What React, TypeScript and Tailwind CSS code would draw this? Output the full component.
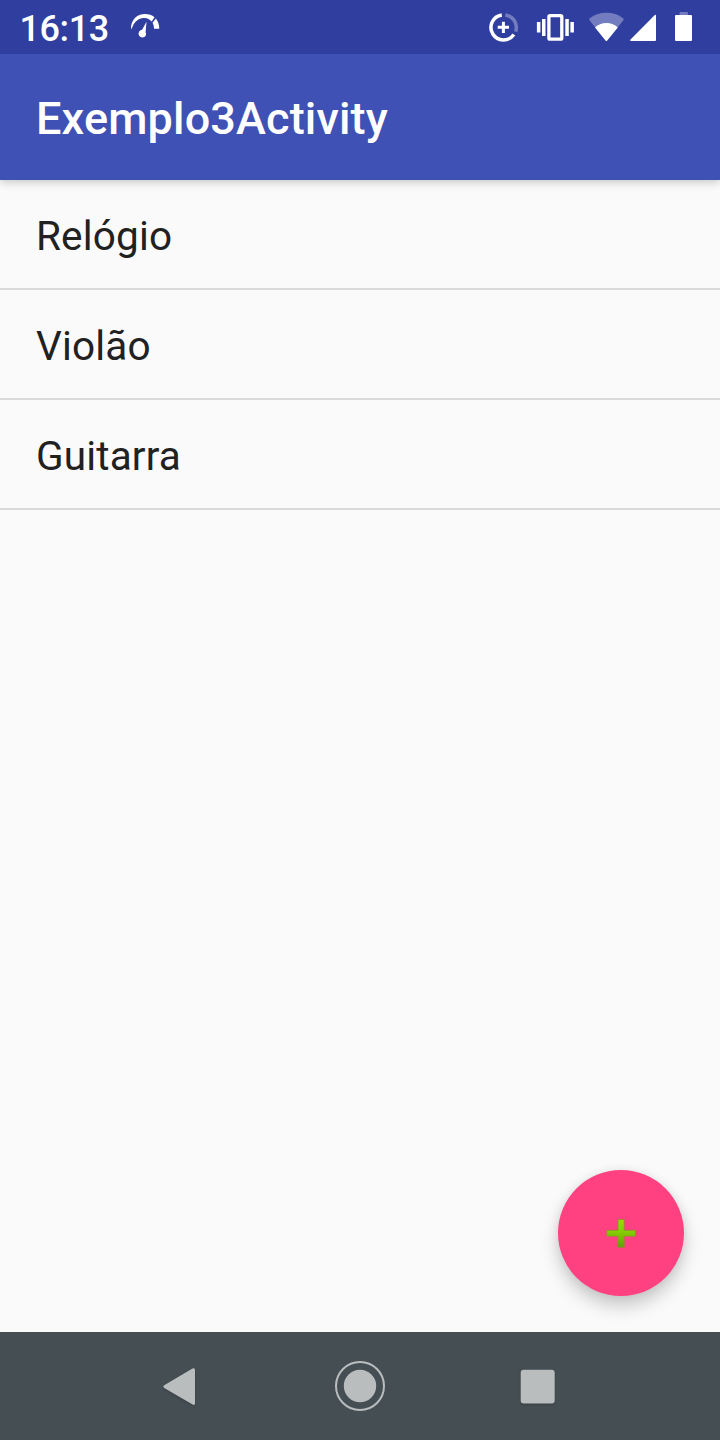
const items = ['Relógio', 'Violão', 'Guitarra'];

function StatusBar() {
  return (
    <div className="relative z-20 flex h-[54px] shrink-0 items-center bg-[#303f9f] pl-[19.500px] text-white">
      <span className="w-[90.500px] pt-[3px] text-[36px] leading-[42px] font-medium tracking-[-0.4px] whitespace-nowrap">16:13</span>
      <svg className="ml-[18px] h-[54px] w-[36px]" viewBox="128 0 36 54" fill="#fff">
        <path d="M131 28.500C130.800 20 137 14 145 14c3.800 0 7 1.200 9.500 3.200l-2.800 4.300C149.800 19.600 147.500 18.200 144.500 18 138.500 17.700 133.800 22 131.800 28.800Z" />
        <path d="M155.800 18.400c2.100 2.300 3.500 6 3.500 10.400h-5.300c-.1-2.600-.4-4.200-1.500-6Z" />
        <path d="M146.500 21.800l-.9 10.400c1.400 2.600-.4 5.200-3.100 5.200-2.900 0-4.800-2.900-3.500-5.400.7-1.400 1.800-1.800 3.100-2.200Z" />
      </svg>
      <div className="ml-auto flex h-full">
        <svg className="h-[54px] w-[48px]" viewBox="484 0 48 54" fill="none" stroke="#fff" strokeWidth="3.500">
          <path d="M501.800 14.900A12.600 12.600 0 1 0 513.900 34.600" />
          <path d="M505.300 14.900A12.600 12.600 0 0 1 515.600 31.600" strokeOpacity=".32" />
          <path d="M503.400 21.700v11.300M497.700 27.300h11.300" strokeWidth="3" />
        </svg>
        <svg className="h-[54px] w-[54px]" viewBox="532 0 54 54" fill="#fff">
          <rect x="548.900" y="15.700" width="12.900" height="23.500" rx="1.200" fill="none" stroke="#fff" strokeWidth="3.300" />
          <rect x="542" y="19" width="3.500" height="17" />
          <rect x="536.900" y="22" width="3.500" height="10.500" />
          <rect x="565.300" y="19" width="3.500" height="17" />
          <rect x="570.400" y="22" width="3.500" height="10.500" />
        </svg>
        <svg className="h-[54px] w-[42px]" viewBox="586 0 42 54" fill="#fff">
          <path d="M589.500 20.200q-.9-1.200.3-2Q597 12.800 606.400 12.800t16.700 5.400q1.200.8.300 2L607.200 40.500q-.8 1-1.600 0Z" fillOpacity=".32" />
          <path d="M595 27.600Q599.500 23 606.400 23t11.400 4.600L607.200 40.500q-.8 1-1.600 0Z" />
        </svg>
        <svg className="h-[54px] w-[34px]" viewBox="628 0 34 54" fill="#fff">
          <path d="M630.300 39.700 654.800 15q1.200-.8 1.200.7v24.300q0 1-1 1h-24q-1.300 0-.7-1.300Z" />
        </svg>
        <svg className="h-[54px] w-[58px]" viewBox="662 0 58 54" fill="#fff">
          <rect x="679.600" y="12" width="8.200" height="3" fillOpacity=".32" />
          <rect x="675" y="15" width="17" height="26" rx="1" />
        </svg>
      </div>
    </div>
  );
}

function NavigationBar() {
  return (
    <nav className="flex h-[108px] shrink-0 items-center justify-center bg-[#454e53]">
      <svg className="h-[108px] w-[400px]" viewBox="160 1332 400 108" fill="#b9bdbe">
        <g className="drop-shadow-[0_1px_1px_rgba(0,0,0,0.2)]">
          <path d="M164.200 1385.200 192.500 1368.500Q195 1367.300 195 1370v33.200q0 2.500-2.400 1.300L164.200 1388q-1.700-1.400 0-2.800Z" />
          <rect x="520.700" y="1369.700" width="34" height="33.700" rx="3" />
        </g>
        <circle cx="360" cy="1386" r="24" fill="none" stroke="#b9bdbe" strokeWidth="2" />
        <circle cx="360" cy="1386" r="16.200" />
      </svg>
    </nav>
  );
}

export default function App() {
  return (
    <div className="relative flex h-[1440px] w-[720px] flex-col overflow-hidden bg-[#fafafa] font-['Roboto',sans-serif]">
      <StatusBar />
      <header className="z-10 flex h-[126px] shrink-0 items-center bg-[#3f51b5] px-9 pt-[4px] shadow-[0_2px_9px_rgba(0,0,0,0.22)]">
        <h1 className="text-[45px] leading-[54px] font-medium tracking-[0.16px] text-white">Exemplo3Activity</h1>
      </header>
      <main className="flex-1">
        <ul>
          {items.map((item) => (
            <li key={item} className="flex h-[110px] items-center border-b-2 border-[#dadada] px-9 pt-[4px] text-[40.500px] leading-[48px] tracking-[0.16px] text-[#212121]">
              {item}
            </li>
          ))}
        </ul>
      </main>
      <button aria-label="Adicionar" className="absolute right-[36px] bottom-[144px] flex size-[126px] items-center justify-center rounded-full bg-[#ff4081] shadow-[0_10px_18px_rgba(0,0,0,0.20),0_0_10px_rgba(0,0,0,0.07)]">
        <svg className="size-[54px]" viewBox="594 1206 54 54">
          <defs>
            <linearGradient id="plus" x1="0" y1="0" x2="0" y2="1">
              <stop offset="0" stopColor="#94dc00" />
              <stop offset=".45" stopColor="#86cc00" />
              <stop offset="1" stopColor="#60a000" />
            </linearGradient>
          </defs>
          <path d="M618 1219.500h6.200v10.800h11.300v6H624.200v11h-6.200v-11h-11.200v-6H618Z" fill="url(#plus)" stroke="#8b8a28" strokeOpacity=".65" strokeWidth="1" strokeLinejoin="round" />
        </svg>
      </button>
      <NavigationBar />
    </div>
  );
}
